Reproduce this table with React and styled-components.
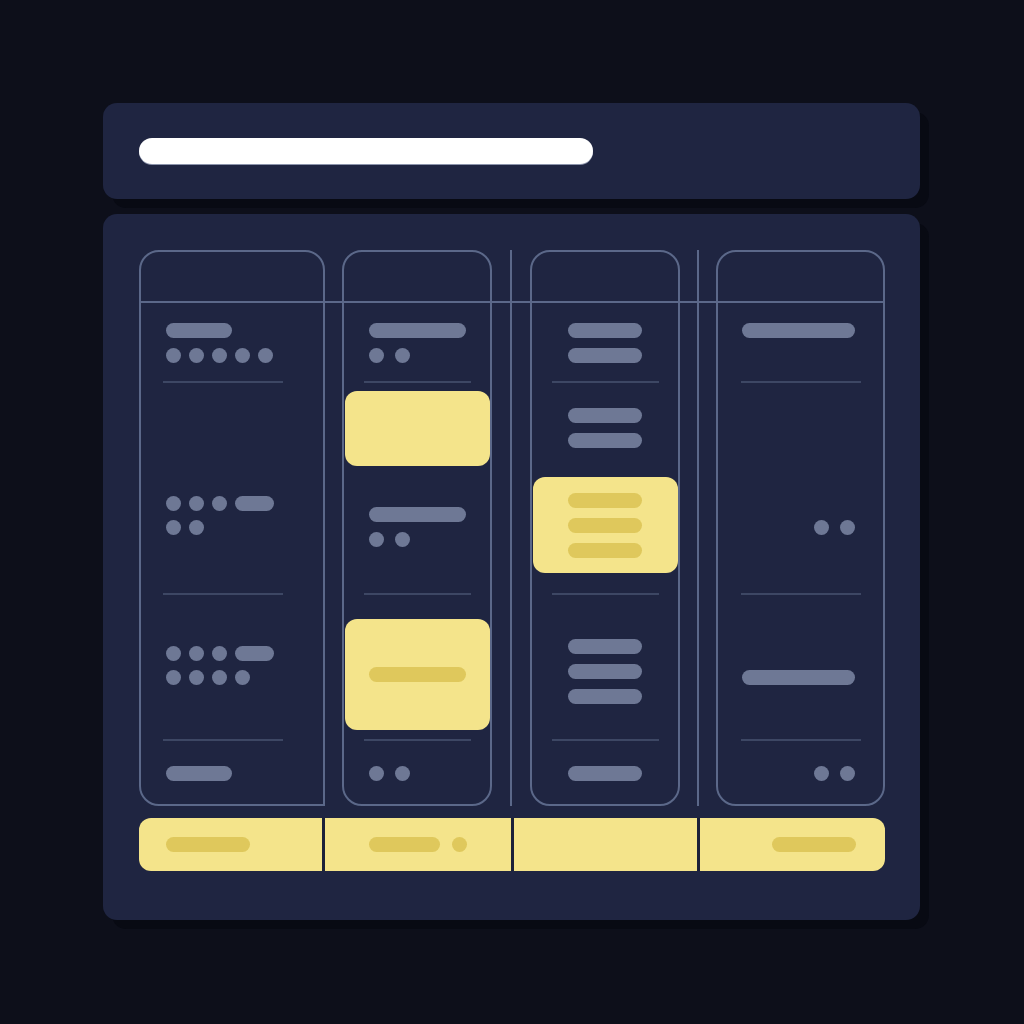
import React from 'react';
import styled, { createGlobalStyle } from 'styled-components';

const GlobalStyle = createGlobalStyle`
  html, body {
    margin: 0;
    padding: 0;
    background: #0d0f1a;
    font-family: 'Inter', 'Liberation Sans', sans-serif;
  }
`;

const Page = styled.div`
  min-height: 1024px;
  padding: 103px 0 0 103px;
  box-sizing: border-box;
`;

const Frame = styled.div`
  width: 817px;
  display: flex;
  flex-direction: column;
  gap: 15px;
`;

const Panel = styled.div`
  background: #1f2541;
  border-radius: 14px;
  box-shadow: 9px 9px 0 rgba(3, 4, 10, 0.45);
  box-sizing: border-box;
`;

const Header = styled(Panel)`
  height: 96px;
  display: flex;
  align-items: center;
  padding: 0 36px;
`;

const TitleBar = styled.div`
  width: 454px;
  height: 26px;
  border-radius: 13px;
  background: #ffffff;
  box-shadow: 0 1px 0 #8b93aa;
`;

const Body = styled(Panel)`
  height: 706px;
  padding: 36px 35px 49px 36px;
  display: flex;
  flex-direction: column;
  gap: 12px;
`;

const Board = styled.div`
  position: relative;
  height: 556px;
  display: grid;
  grid-template-columns: 186px 17px 150px 38px 150px 36px 169px;

  &::after {
    content: '';
    position: absolute;
    left: 0;
    right: 0;
    top: 51px;
    height: 2px;
    background: #5b6889;
  }
`;

const Column = styled.div`
  border: 2px solid #5b6889;
  border-radius: 20px;
  border-bottom-right-radius: ${p => (p.$square ? '0' : '20px')};
  display: flex;
  flex-direction: column;
  min-height: 0;
`;

const ColumnHead = styled.div`
  height: 50px;
  flex: none;
`;

const Gap = styled.div`
  display: flex;
  justify-content: center;

  &::before {
    content: '';
    width: ${p => (p.$line ? '2px' : '0')};
    background: #5b6889;
  }
`;

const Section = styled.div`
  flex: ${p => (p.$h ? 'none' : '1')};
  height: ${p => (p.$h ? `${p.$h}px` : 'auto')};
  padding: ${p => p.$pt || 0}px ${p => p.$pr ?? 0}px 0 ${p => p.$pl ?? 0}px;
  box-sizing: border-box;
  display: flex;
  flex-direction: column;
  align-items: ${p => p.$align || 'flex-start'};
  gap: ${p => p.$gap ?? 10}px;
`;

const Rule = styled.div`
  height: 2px;
  flex: none;
  margin: 0 ${p => p.$r}px 0 ${p => p.$l}px;
  background: #3d4764;
`;

const Row = styled.div`
  display: flex;
  align-items: center;
  gap: ${p => p.$gap ?? 8}px;
  margin-top: ${p => p.$mt || 0}px;
`;

const Dot = styled.span`
  width: 15px;
  height: 15px;
  border-radius: 50%;
  flex: none;
  background: ${p => (p.$warm ? '#dfc85c' : '#6e7895')};
`;

const Bar = styled.span`
  width: ${p => p.$w}px;
  height: 15px;
  border-radius: 8px;
  flex: none;
  margin-top: ${p => p.$mt || 0}px;
  background: ${p => (p.$warm ? '#dfc85c' : '#6e7895')};
`;

const Card = styled.div`
  width: 145px;
  height: ${p => p.$h}px;
  margin: ${p => p.$mt || 0}px 0 0 ${p => p.$ml ?? 1}px;
  flex: none;
  background: #f4e48b;
  border-radius: 12px;
  display: flex;
  flex-direction: column;
  align-items: center;
  justify-content: center;
  gap: 10px;
`;

const Footer = styled.div`
  height: 53px;
  display: grid;
  grid-template-columns: 183px 186px 183px 185px;
  border-radius: 12px;
  overflow: hidden;
  gap: 3px;
  background: #1c2139;
`;

const FooterCell = styled.div`
  background: #f4e48b;
  display: flex;
  align-items: center;
  justify-content: ${p => (p.$end ? 'flex-end' : 'flex-start')};
  padding: 0 ${p => p.$pr || 0}px 0 ${p => p.$pl || 0}px;
  gap: 12px;
`;

const Dots = ({ n, warm }) =>
  Array.from({ length: n }, (_, i) => <Dot key={i} $warm={warm} />);

export default function App() {
  return (
    <Page>
      <GlobalStyle />
      <Frame>
        <Header>
          <TitleBar />
        </Header>
        <Body>
          <Board>
            <Column $square>
              <ColumnHead />
              <Section $h={79} $pt={21} $pl={25}>
                <Bar $w={66} />
                <Row><Dots n={5} /></Row>
              </Section>
              <Rule $l={22} $r={40} />
              <Section $h={210} $pt={113} $pl={25} $gap={9}>
                <Row><Dots n={3} /><Bar $w={39} /></Row>
                <Row><Dots n={2} /></Row>
              </Section>
              <Rule $l={22} $r={40} />
              <Section $h={144} $pt={51} $pl={25} $gap={9}>
                <Row><Dots n={3} /><Bar $w={39} /></Row>
                <Row><Dots n={4} /></Row>
              </Section>
              <Rule $l={22} $r={40} />
              <Section $pt={25} $pl={25}>
                <Bar $w={66} />
              </Section>
            </Column>

            <Gap />

            <Column>
              <ColumnHead />
              <Section $h={79} $pt={21} $pl={25}>
                <Bar $w={97} />
                <Row $gap={11}><Dots n={2} /></Row>
              </Section>
              <Rule $l={20} $r={19} />
              <Section $h={210} $pt={8} $pl={25}>
                <Card $h={75} $ml={-24} />
                <Bar $w={97} $mt={31} />
                <Row $gap={11}><Dots n={2} /></Row>
              </Section>
              <Rule $l={20} $r={19} />
              <Section $h={144} $pt={24} $pl={25}>
                <Card $h={111} $ml={-24}>
                  <Bar $w={97} $warm />
                </Card>
              </Section>
              <Rule $l={20} $r={19} />
              <Section $pt={25} $pl={25}>
                <Row $gap={11}><Dots n={2} /></Row>
              </Section>
            </Column>

            <Gap $line />

            <Column>
              <ColumnHead />
              <Section $h={79} $pt={21} $align="center">
                <Bar $w={74} />
                <Bar $w={74} />
              </Section>
              <Rule $l={20} $r={19} />
              <Section $h={210} $pt={25} $align="center">
                <Bar $w={74} />
                <Bar $w={74} />
                <Card $h={96} $mt={19} $ml={0}>
                  <Bar $w={74} $warm />
                  <Bar $w={74} $warm />
                  <Bar $w={74} $warm />
                </Card>
              </Section>
              <Rule $l={20} $r={19} />
              <Section $h={144} $pt={44} $align="center">
                <Bar $w={74} />
                <Bar $w={74} />
                <Bar $w={74} />
              </Section>
              <Rule $l={20} $r={19} />
              <Section $pt={25} $align="center">
                <Bar $w={74} />
              </Section>
            </Column>

            <Gap $line />

            <Column>
              <ColumnHead />
              <Section $h={79} $pt={21} $pl={24}>
                <Bar $w={113} />
              </Section>
              <Rule $l={23} $r={22} />
              <Section $h={210} $pt={137} $pr={28} $align="flex-end">
                <Row $gap={11}><Dots n={2} /></Row>
              </Section>
              <Rule $l={23} $r={22} />
              <Section $h={144} $pt={75} $pl={24}>
                <Bar $w={113} />
              </Section>
              <Rule $l={23} $r={22} />
              <Section $pt={25} $pr={28} $align="flex-end">
                <Row $gap={11}><Dots n={2} /></Row>
              </Section>
            </Column>
          </Board>

          <Footer>
            <FooterCell $pl={27}>
              <Bar $w={84} $warm />
            </FooterCell>
            <FooterCell $pl={44}>
              <Bar $w={71} $warm />
              <Dot $warm />
            </FooterCell>
            <FooterCell />
            <FooterCell $end $pr={29}>
              <Bar $w={84} $warm />
            </FooterCell>
          </Footer>
        </Body>
      </Frame>
    </Page>
  );
}
